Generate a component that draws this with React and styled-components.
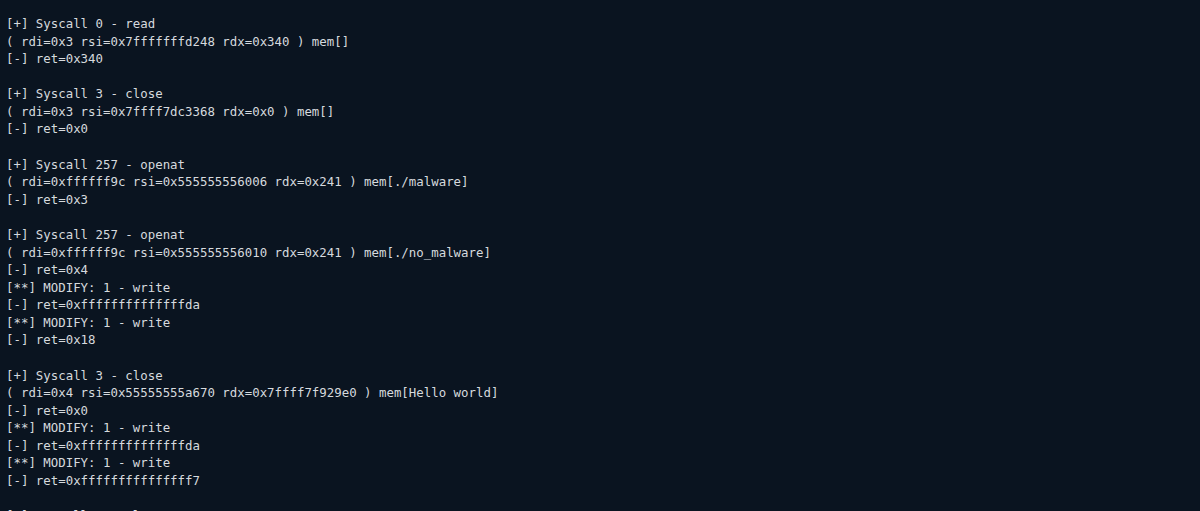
import styled, { createGlobalStyle } from "styled-components";

const GlobalStyle = createGlobalStyle`
  html, body {
    margin: 0;
    padding: 0;
    background: #0a1420;
  }
`;

// TERMINAL
const Terminal = styled.div`
  width: 1200px;
  height: 511px;
  overflow: hidden;
  background: #0a1420;
  padding: 15px 6px 0 6px;
  box-sizing: border-box;
  font-family: "DejaVu Sans Mono", "Liberation Mono", monospace;
  font-size: 12.4px;
  line-height: 17.58px;
  color: #d6dade;
`;

const Line = styled.div`
  white-space: pre;
  height: 17.58px;
`;

const lines = [
  "[+] Syscall 0 - read",
  "( rdi=0x3 rsi=0x7fffffffd248 rdx=0x340 ) mem[]",
  "[-] ret=0x340",
  "",
  "[+] Syscall 3 - close",
  "( rdi=0x3 rsi=0x7ffff7dc3368 rdx=0x0 ) mem[]",
  "[-] ret=0x0",
  "",
  "[+] Syscall 257 - openat",
  "( rdi=0xffffff9c rsi=0x555555556006 rdx=0x241 ) mem[./malware]",
  "[-] ret=0x3",
  "",
  "[+] Syscall 257 - openat",
  "( rdi=0xffffff9c rsi=0x555555556010 rdx=0x241 ) mem[./no_malware]",
  "[-] ret=0x4",
  "[**] MODIFY: 1 - write",
  "[-] ret=0xffffffffffffffda",
  "[**] MODIFY: 1 - write",
  "[-] ret=0x18",
  "",
  "[+] Syscall 3 - close",
  "( rdi=0x4 rsi=0x55555555a670 rdx=0x7ffff7f929e0 ) mem[Hello world]",
  "[-] ret=0x0",
  "[**] MODIFY: 1 - write",
  "[-] ret=0xffffffffffffffda",
  "[**] MODIFY: 1 - write",
  "[-] ret=0xfffffffffffffff7",
  "",
  "[+] Syscall 3 - close",
];

export default function App() {
  return (
    <>
      <GlobalStyle />
      <Terminal>
        {lines.map((text, i) => (
          <Line key={i}>{text}</Line>
        ))}
      </Terminal>
    </>
  );
}
